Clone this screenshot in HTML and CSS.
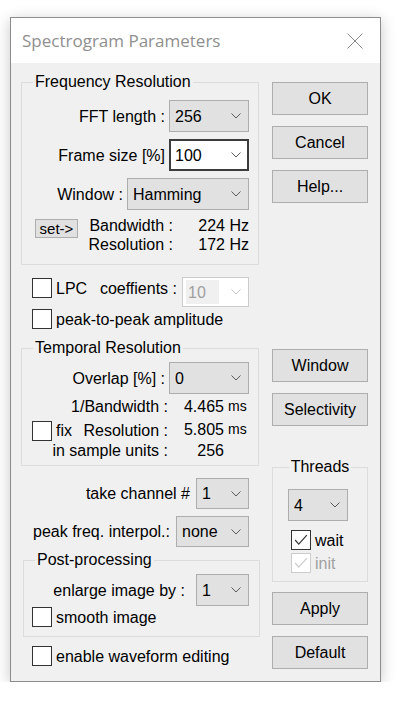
FILE: index.html
```html
<!DOCTYPE html>
<html lang="en">
<head>
    <meta charset="UTF-8">
    <meta name="viewport" content="width=device-width, initial-scale=1.0">
    <title>Spectrogram Parameters</title>
    <link rel="stylesheet" href="styles.css">
</head>
<body>
    <div class="dialog">
        <div class="titlebar">
            <span class="title">Spectrogram Parameters</span>
            <svg class="close" viewBox="0 0 16 16"><path d="M0.5 0.5L15.5 15.5M15.5 0.5L0.5 15.5"/></svg>
        </div>

        <div class="content">
            <div class="left">
                <!-- Frequency resolution -->
                <fieldset class="group">
                    <legend>Frequency Resolution</legend>
                    <div class="group-body freq-body">
                        <div class="field">
                            <span>FFT length :</span>
                            <div class="combo w80"><span>256</span><svg class="chev" viewBox="0 0 10 6"><path d="M0.5 0.5L5 5L9.5 0.5"/></svg></div>
                        </div>
                        <div class="field">
                            <span>Frame size [%]</span>
                            <div class="combo combo-edit w80"><span>100</span><svg class="chev" viewBox="0 0 10 6"><path d="M0.5 0.5L5 5L9.5 0.5"/></svg></div>
                        </div>
                        <div class="field">
                            <span>Window :</span>
                            <div class="combo w122"><span>Hamming</span><svg class="chev" viewBox="0 0 10 6"><path d="M0.5 0.5L5 5L9.5 0.5"/></svg></div>
                        </div>
                        <div class="readout freq-readout">
                            <button class="set-btn">set-&gt;</button>
                            <span class="lbl">Bandwidth :</span>
                            <span class="val">224 Hz</span>
                            <span></span>
                            <span class="lbl">Resolution :</span>
                            <span class="val">172 Hz</span>
                        </div>
                    </div>
                </fieldset>

                <div class="opt-row lpc-row">
                    <span class="check"></span>
                    <span class="opt-text">LPC</span>
                    <span class="coef">coeffients :</span>
                    <div class="combo combo-off w67"><span class="off-field">10</span><svg class="chev" viewBox="0 0 10 6"><path d="M0.5 0.5L5 5L9.5 0.5"/></svg></div>
                </div>
                <div class="opt-row peak-row">
                    <span class="check"></span>
                    <span class="opt-text">peak-to-peak amplitude</span>
                </div>

                <!-- Temporal resolution -->
                <fieldset class="group temporal">
                    <legend>Temporal Resolution</legend>
                    <div class="group-body temporal-body">
                        <div class="field">
                            <span>Overlap [%] :</span>
                            <div class="combo w80"><span>0</span><svg class="chev" viewBox="0 0 10 6"><path d="M0.5 0.5L5 5L9.5 0.5"/></svg></div>
                        </div>
                        <div class="readout temp-readout">
                            <span class="lbl">1/Bandwidth :</span>
                            <span class="val">4.465</span>
                            <span class="unit">ms</span>

                            <span class="fix-cell">
                                <span class="check"></span>
                                <span class="opt-text">fix</span>
                                <span class="fix-lbl">Resolution :</span>
                            </span>
                            <span class="val">5.805</span>
                            <span class="unit">ms</span>

                            <span class="lbl">in sample units :</span>
                            <span class="val">256</span>
                            <span class="unit"></span>
                        </div>
                    </div>
                </fieldset>

                <div class="field plain channel-row">
                    <span class="gap6">take channel #</span>
                    <div class="combo combo-sm w53"><span>1</span><svg class="chev" viewBox="0 0 10 6"><path d="M0.5 0.5L5 5L9.5 0.5"/></svg></div>
                </div>
                <div class="field plain interp-row">
                    <span class="gap6">peak freq. interpol.:</span>
                    <div class="combo combo-sm w73"><span>none</span><svg class="chev" viewBox="0 0 10 6"><path d="M0.5 0.5L5 5L9.5 0.5"/></svg></div>
                </div>

                <!-- Post-processing -->
                <fieldset class="group post">
                    <legend>Post-processing</legend>
                    <div class="group-body post-body">
                        <div class="field">
                            <span class="gap11">enlarge image by :</span>
                            <div class="combo w53"><span>1</span><svg class="chev" viewBox="0 0 10 6"><path d="M0.5 0.5L5 5L9.5 0.5"/></svg></div>
                        </div>
                        <div class="opt-row smooth-row">
                            <span class="check"></span>
                            <span class="opt-text">smooth image</span>
                        </div>
                    </div>
                </fieldset>

                <div class="opt-row wave-row">
                    <span class="check"></span>
                    <span class="opt-text">enable waveform editing</span>
                </div>
            </div>

            <div class="right">
                <div class="btn-group">
                    <button class="btn">OK</button>
                    <button class="btn">Cancel</button>
                    <button class="btn">Help...</button>
                </div>
                <div class="btn-group view-btns">
                    <button class="btn">Window</button>
                    <button class="btn">Selectivity</button>
                </div>

                <fieldset class="group threads">
                    <legend>Threads</legend>
                    <div class="group-body threads-body">
                        <div class="combo w60"><span>4</span><svg class="chev" viewBox="0 0 10 6"><path d="M0.5 0.5L5 5L9.5 0.5"/></svg></div>
                        <div class="opt-row wait-row">
                            <span class="check"><svg viewBox="0 0 20 20"><path d="M3.5 10L7.5 14.5L16.5 4.5"/></svg></span>
                            <span class="opt-text">wait</span>
                        </div>
                        <div class="opt-row init-row">
                            <span class="check check-off"><svg viewBox="0 0 20 20"><path d="M3.5 10L7.5 14.5L16.5 4.5"/></svg></span>
                            <span class="opt-text">init</span>
                        </div>
                    </div>
                </fieldset>

                <div class="btn-group apply-btns">
                    <button class="btn">Apply</button>
                    <button class="btn">Default</button>
                </div>
            </div>
        </div>
    </div>
</body>
</html>
```

FILE: styles.css
```css
* {
    box-sizing: border-box;
}

body {
    margin: 0;
    background-color: #fff;
    font-family: 'Liberation Sans', Arial, sans-serif;
    font-size: 16px;
    color: #000;
}

.dialog {
    width: 371px;
    height: 665px;
    margin: 17px 0 0 10px;
    border: 1px solid #8c8c8c;
    background-color: #f0f0f0;
    box-shadow: 0 3px 14px rgba(0, 0, 0, 0.22);
    display: flex;
    flex-direction: column;
    overflow: hidden;
}

.titlebar {
    flex: none;
    height: 45px;
    background-color: #fff;
    display: flex;
    align-items: center;
    padding: 0 17px 0 11px;
}

.title {
    font-family: 'Open Sans', 'Noto Sans', sans-serif;
    font-size: 17px;
    color: #8f8f8f;
}

.close {
    width: 16px;
    height: 16px;
    margin-left: auto;
    fill: none;
    stroke: #8a8a8a;
    stroke-width: 1;
}

.content {
    display: flex;
    gap: 13px;
    padding: 10px 12px 0 10px;
    line-height: 19px;
}

.left {
    width: 238px;
    display: flex;
    flex-direction: column;
}

.right {
    width: 96px;
    display: flex;
    flex-direction: column;
    padding-top: 9px;
}

/* group boxes */
.group {
    margin: 0;
    padding: 0;
    min-width: 0;
    border: 1px solid #dcdcdc;
}

.group legend {
    padding: 0 2px;
    margin-left: 11px;
    line-height: 18px;
}

.freq-body {
    padding: 9px 9px 10px 13px;
}

.temporal {
    margin-top: 10px;
}

.temporal-body {
    padding: 5px 9px 5px 10px;
}

.post {
    margin: 4px -1px 0 2px;
}

.post-body {
    padding: 5px 10px 9px 8px;
}

.threads {
    margin-top: 32px;
}

.threads legend {
    margin: 0 auto;
}

.threads-body {
    padding: 13px 0 8px 15px;
}

/* label + combo rows */
.field {
    display: flex;
    justify-content: flex-end;
    align-items: center;
    gap: 4px;
    height: 32px;
}

.field + .field {
    margin-top: 7px;
}

.field.plain {
    padding-right: 10px;
    height: 31px;
}

.channel-row {
    margin-top: 12px;
}

.interp-row {
    margin-top: 8px;
}

.gap6 {
    margin-right: 2px;
}

.gap11 {
    margin-right: 7px;
}

.combo {
    flex: none;
    height: 100%;
    display: flex;
    align-items: center;
    justify-content: space-between;
    padding: 0 7px 0 5px;
    background-color: #e1e1e1;
    border: 1px solid #adadad;
}

.combo-edit {
    background-color: #fff;
    border: 2px solid #3c3c3c;
    padding-left: 4px;
    padding-right: 6px;
}

.combo-off {
    background-color: #fff;
    border-color: #cccccc;
    padding: 2px 7px 2px 3px;
    color: #a0a0a0;
}

.off-field {
    align-self: stretch;
    width: 33px;
    padding-left: 2px;
    display: flex;
    align-items: center;
    background-color: #f0f0f0;
}

.combo-off .chev {
    stroke: #c4c4c4;
}

.chev {
    width: 10px;
    height: 6px;
    fill: none;
    stroke: #5a5a5a;
    stroke-width: 1;
}

.w53 { width: 53px; }
.w60 { width: 60px; height: 32px; }
.w67 { width: 67px; }
.w73 { width: 73px; }
.w80 { width: 80px; }
.w122 { width: 122px; }

/* readouts */
.readout {
    display: grid;
    grid-auto-rows: 19px;
}

.freq-readout {
    margin-top: 6px;
    grid-template-columns: 43px 95px 1fr;
}

.temp-readout {
    margin-top: 3px;
    grid-template-columns: 136px 56px 1fr;
    grid-template-rows: 23px 21px 19px;
}

.lbl,
.val {
    text-align: right;
    white-space: nowrap;
}

.unit {
    padding-left: 4px;
    font-size: 14px;
}

.set-btn {
    align-self: start;
    margin-top: 3px;
    width: 43px;
    height: 19px;
    padding: 0;
    font-family: inherit;
    font-size: 15px;
    line-height: 16px;
    color: #000;
    background-color: #e1e1e1;
    border: 1px solid #adadad;
}

.fix-cell {
    display: flex;
    align-items: center;
}

.fix-lbl {
    margin-left: auto;
}

/* checkboxes */
.opt-row {
    display: flex;
    align-items: center;
    padding: 0 10px 0 11px;
}

.check {
    flex: none;
    width: 20px;
    height: 20px;
    border: 1px solid #333;
    background-color: #fff;
}

.check svg {
    display: block;
    width: 18px;
    height: 18px;
    fill: none;
    stroke: #333;
    stroke-width: 1.3;
}

.check-off {
    border-color: #cccccc;
}

.check-off svg {
    stroke: #cccccc;
}

.opt-text {
    margin-left: 4px;
    white-space: nowrap;
}

.lpc-row {
    margin-top: 12px;
    height: 30px;
    align-items: flex-start;
}

.lpc-row .check {
    margin-top: 1px;
}

.lpc-row .opt-text,
.lpc-row .coef {
    margin-top: 2px;
}

.coef {
    margin-left: auto;
    margin-right: 5px;
}

.peak-row {
    margin-top: 2px;
    height: 20px;
}

.smooth-row {
    margin-top: 1px;
    height: 20px;
    padding: 0;
}

.wave-row {
    margin-top: 9px;
    height: 20px;
}

.wait-row {
    margin-top: 9px;
    padding: 0 0 0 3px;
    height: 20px;
}

.init-row {
    margin-top: 3px;
    padding: 0 0 0 3px;
    height: 20px;
    color: #a0a0a0;
}

/* push buttons */
.btn-group {
    display: flex;
    flex-direction: column;
    gap: 11px;
}

.view-btns {
    margin-top: 146px;
}

.apply-btns {
    margin-top: 10px;
}

.btn {
    height: 33px;
    padding: 0;
    font-family: inherit;
    font-size: 16px;
    color: #000;
    background-color: #e1e1e1;
    border: 1px solid #adadad;
}
```
